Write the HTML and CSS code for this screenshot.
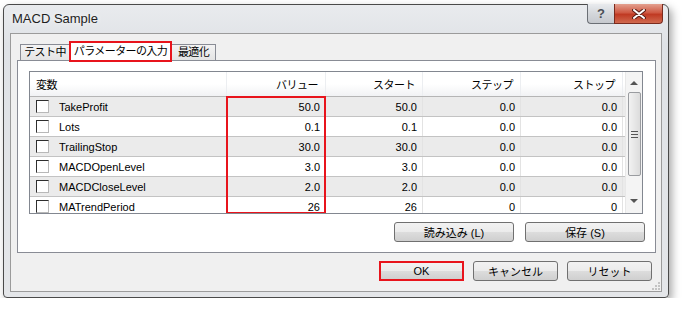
FILE: index.html
```html
<!DOCTYPE html>
<html lang="ja">
<head>
  <meta charset="UTF-8" />
  <title>MACD Sample</title>
  <link rel="stylesheet" href="styles.css">
</head>
<body>

  <div class="window">
    <div class="titlebar">
      <span class="title">MACD Sample</span>
      <div class="caption-btns">
        <span class="cap help">?</span>
        <span class="cap close">
          <svg width="14" height="10" viewBox="0 0 14 10">
            <path d="M2 1 L12 9 M12 1 L2 9" stroke="#5a1f17" stroke-width="4" stroke-linecap="round"/>
            <path d="M2 1 L12 9 M12 1 L2 9" stroke="#fff" stroke-width="2" stroke-linecap="round"/>
          </svg>
        </span>
      </div>
    </div>

    <div class="client">
      <div class="tabs">
        <span class="tab">テスト中</span>
        <span class="tab active">パラメーターの入力</span>
        <span class="tab">最適化</span>
      </div>

      <div class="panel">
        <div class="grid">
          <div class="table">
            <div class="row head">
              <span class="cell name">変数</span>
              <span class="cell">バリュー</span>
              <span class="cell">スタート</span>
              <span class="cell">ステップ</span>
              <span class="cell">ストップ</span>
            </div>
            <div class="row odd">
              <span class="cell name"><i class="check"></i>TakeProfit</span>
              <span class="cell">50.0</span><span class="cell">50.0</span><span class="cell">0.0</span><span class="cell">0.0</span>
            </div>
            <div class="row">
              <span class="cell name"><i class="check"></i>Lots</span>
              <span class="cell">0.1</span><span class="cell">0.1</span><span class="cell">0.0</span><span class="cell">0.0</span>
            </div>
            <div class="row odd">
              <span class="cell name"><i class="check"></i>TrailingStop</span>
              <span class="cell">30.0</span><span class="cell">30.0</span><span class="cell">0.0</span><span class="cell">0.0</span>
            </div>
            <div class="row">
              <span class="cell name"><i class="check"></i>MACDOpenLevel</span>
              <span class="cell">3.0</span><span class="cell">3.0</span><span class="cell">0.0</span><span class="cell">0.0</span>
            </div>
            <div class="row odd">
              <span class="cell name"><i class="check"></i>MACDCloseLevel</span>
              <span class="cell">2.0</span><span class="cell">2.0</span><span class="cell">0.0</span><span class="cell">0.0</span>
            </div>
            <div class="row">
              <span class="cell name"><i class="check"></i>MATrendPeriod</span>
              <span class="cell">26</span><span class="cell">26</span><span class="cell">0</span><span class="cell">0</span>
            </div>
          </div>

          <div class="scrollbar">
            <span class="arrow up"></span>
            <div class="thumb"><span class="grip-lines"></span></div>
            <span class="arrow down"></span>
          </div>

          <div class="mark"></div>
        </div>

        <div class="panel-btns">
          <button class="btn wide">読み込み (L)</button>
          <button class="btn wide">保存 (S)</button>
        </div>
      </div>

      <div class="dialog-btns">
        <button class="btn marked">OK</button>
        <button class="btn">キャンセル</button>
        <button class="btn">リセット</button>
      </div>

      <svg class="size-grip" width="8" height="8" viewBox="0 0 8 8">
        <rect x="6" y="0" width="2" height="2" fill="#c4c4c4"/>
        <rect x="3" y="3" width="2" height="2" fill="#c4c4c4"/>
        <rect x="6" y="3" width="2" height="2" fill="#c4c4c4"/>
        <rect x="0" y="6" width="2" height="2" fill="#c4c4c4"/>
        <rect x="3" y="6" width="2" height="2" fill="#c4c4c4"/>
        <rect x="6" y="6" width="2" height="2" fill="#c4c4c4"/>
      </svg>
    </div>
  </div>

</body>
</html>
```

FILE: styles.css
```css
* {
  margin: 0;
  padding: 0;
  box-sizing: border-box;
}
body {
  background: #ffffff;
  font-family: 'Liberation Sans', 'Noto Sans CJK JP', sans-serif;
  font-size: 11px;
  color: #000;
}
.window {
  margin: 4px 0 0 3px;
  width: 666px;
  height: 294px;
  border: 1px solid #4a4a4a;
  border-radius: 6px 6px 4px 4px;
  background: linear-gradient(#e9ebee, #dfe2e6 40px, #e4e6e9);
  box-shadow: 3px 4px 8px rgba(0, 0, 0, 0.35);
  display: flex;
  flex-direction: column;
}
.titlebar {
  height: 28px;
  display: flex;
  align-items: flex-start;
  padding-right: 5px;
}
.title {
  flex: 1;
  padding-left: 8px;
  line-height: 27px;
  font-size: 13px;
  color: #1e1e1e;
  text-shadow: 0 0 6px #fff;
}
.caption-btns {
  display: flex;
  margin-top: -1px;
}
.cap {
  height: 20px;
  display: flex;
  align-items: center;
  justify-content: center;
  border: 1px solid #6b6f75;
  border-top: none;
}
.help {
  width: 27px;
  border-radius: 0 0 0 4px;
  border-right: none;
  background: linear-gradient(#e9ebee, #d4d7db 50%, #c6c9ce);
  color: #4b4f56;
  font-size: 13px;
  font-weight: bold;
}
.close {
  width: 49px;
  border-radius: 0 0 4px 0;
  background: linear-gradient(#e3a08f, #cf5a44 45%, #c03a23 55%, #d0694f);
  border-color: #7a2b1e;
}
.client {
  position: relative;
  flex: 1;
  margin: 0 6px 5px 6px;
  border: 1px solid #9b9b9b;
  background: #f0f0f0;
  padding-top: 7px;
}
.tabs {
  height: 19px;
  display: flex;
  align-items: flex-end;
  padding-left: 9px;
}
.tab {
  height: 16px;
  line-height: 15px;
  text-align: center;
  letter-spacing: -0.6px;
  border: 1px solid #898c95;
  border-bottom: none;
  background: linear-gradient(#f3f3f3, #e4e4e4);
  white-space: nowrap;
  overflow: hidden;
}
.tab:first-child {
  width: 49px;
  border-right: none;
}
.tab:last-child {
  width: 44px;
  border-left: none;
}
.tab.active {
  position: relative;
  z-index: 1;
  width: 103px;
  height: 21px;
  margin-bottom: -2px;
  line-height: 17px;
  border: 2px solid #e8141c;
  background: #ffffff;
}
.panel {
  margin: 0 5px 0 6px;
  height: 193px;
  border: 1px solid #898c95;
  background: #ffffff;
  padding: 10px 12px 0 11px;
}
.grid {
  position: relative;
  height: 143px;
  border: 1px solid #828790;
  display: flex;
  overflow: hidden;
}
.table {
  flex: 1;
}
.row {
  display: grid;
  grid-template-columns: 197px 99px 97px 98px 102px;
  height: 20px;
  border-bottom: 1px solid #c3c3c3;
  background: #ffffff;
}
.row.odd {
  background: #ebebeb;
}
.row.head {
  height: 25px;
  background: linear-gradient(#ffffff, #ffffff 50%, #f1f2f4);
  border-bottom: 1px solid #b5b5b5;
}
.cell {
  display: flex;
  align-items: center;
  justify-content: flex-end;
  padding-right: 5px;
  border-right: 1px solid #e3e3e3;
  white-space: nowrap;
}
.row.head .cell {
  padding-right: 7px;
  letter-spacing: -0.5px;
  border-right-color: #eceef1;
}
.cell.name {
  justify-content: flex-start;
  padding-left: 6px;
}
.check {
  width: 13px;
  height: 13px;
  margin-right: 10px;
  background: #ffffff;
  border: 1px solid;
  border-color: #2e2e2e #b8b8b8 #b8b8b8 #2e2e2e;
}
.scrollbar {
  width: 17px;
  background: #f4f4f4;
  border-left: 1px solid #e8e8e8;
  display: flex;
  flex-direction: column;
  align-items: center;
}
.arrow {
  width: 0;
  height: 0;
  border-left: 4px solid transparent;
  border-right: 4px solid transparent;
}
.arrow.up {
  margin-top: 9px;
  border-bottom: 4px solid #555;
}
.arrow.down {
  margin-top: 23px;
  border-top: 4px solid #555;
}
.thumb {
  width: 13px;
  height: 84px;
  margin-top: 7px;
  border: 1px solid #9a9ca0;
  border-radius: 2px;
  background: linear-gradient(90deg, #f2f2f2, #dcdcdc);
  display: flex;
  align-items: center;
  justify-content: center;
}
.grip-lines {
  width: 7px;
  height: 7px;
  border-top: 1px solid #555;
  border-bottom: 1px solid #555;
  background: linear-gradient(#555, #555) center / 100% 1px no-repeat;
}
.mark {
  position: absolute;
  left: 196px;
  top: 24px;
  width: 100px;
  height: 118px;
  border: 2px solid #e8141c;
}
.panel-btns {
  display: flex;
  justify-content: flex-end;
  gap: 11px;
  margin-top: 8px;
  margin-right: -2px;
}
.btn {
  font-family: 'Liberation Sans', 'Noto Sans CJK JP', sans-serif;
  font-size: 11px;
  color: #000;
  width: 85px;
  height: 20px;
  border: 1px solid #707070;
  border-radius: 3px;
  background: linear-gradient(#f2f2f2, #ebebeb 50%, #dddddd 50%, #cfcfcf);
}
.btn.wide {
  width: 120px;
}
.btn.marked {
  border: 2px solid #e8141c;
  border-radius: 0;
}
.dialog-btns {
  display: flex;
  justify-content: flex-end;
  gap: 9px;
  margin-top: 8px;
  padding-right: 9px;
}
.size-grip {
  position: absolute;
  right: 1px;
  bottom: 1px;
}
```
